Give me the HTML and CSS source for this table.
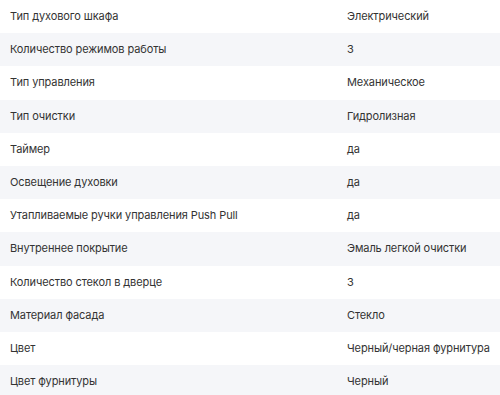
FILE: index.html
```html
<!DOCTYPE html>
<html lang="ru">
<head>
<meta charset="utf-8">
<link rel="stylesheet" href="styles.css">
</head>
<body>
<div class="specs">
  <div class="row"><div class="name">Тип духового шкафа</div><div class="value">Электрический</div></div>
  <div class="row"><div class="name">Количество режимов работы</div><div class="value">3</div></div>
  <div class="row"><div class="name">Тип управления</div><div class="value">Механическое</div></div>
  <div class="row"><div class="name">Тип очистки</div><div class="value">Гидролизная</div></div>
  <div class="row"><div class="name">Таймер</div><div class="value">да</div></div>
  <div class="row"><div class="name">Освещение духовки</div><div class="value">да</div></div>
  <div class="row"><div class="name">Утапливаемые ручки управления Push Pull</div><div class="value">да</div></div>
  <div class="row"><div class="name">Внутреннее покрытие</div><div class="value">Эмаль легкой очистки</div></div>
  <div class="row"><div class="name">Количество стекол в дверце</div><div class="value">3</div></div>
  <div class="row"><div class="name">Материал фасада</div><div class="value">Стекло</div></div>
  <div class="row"><div class="name">Цвет</div><div class="value">Черный/черная фурнитура</div></div>
  <div class="row"><div class="name">Цвет фурнитуры</div><div class="value">Черный</div></div>
</div>
</body>
</html>
```
FILE: styles.css
```css
html, body {
  margin: 0;
  padding: 0;
  background: #ffffff;
}
body {
  font-family: Inter, "Noto Sans", sans-serif;
  font-size: 11px;
  letter-spacing: -0.1px;
  color: #333333;
  width: 500px;
}
.specs {
  display: flex;
  flex-direction: column;
}
.row {
  display: grid;
  grid-template-columns: 337px 1fr;
  line-height: 17.2px;
  padding: 8px 0;
}
.row:nth-child(even) {
  background: #f5f6f9;
}
.name {
  padding-left: 10px;
}
.value {
  padding-left: 10px;
  white-space: nowrap;
}
```
